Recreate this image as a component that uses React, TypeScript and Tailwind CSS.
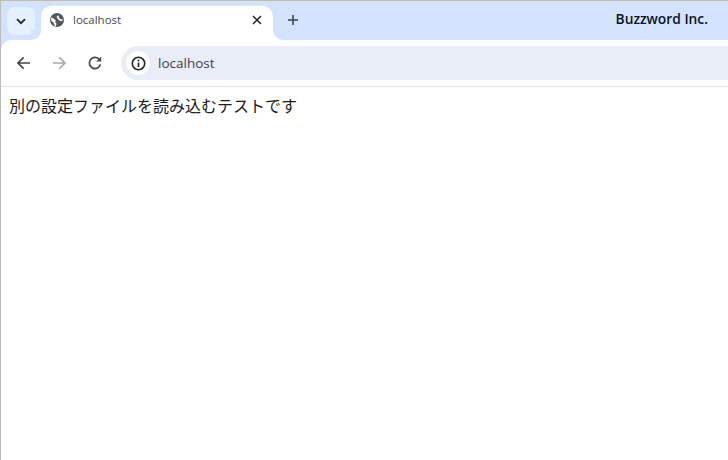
function Globe() {
  return (
    <svg width="16" height="16" viewBox="0 0 16 16">
      <circle cx="8" cy="8" r="7" fill="#54585d" />
      <path d="M2 5.6 4.6 6.4 6.8 8.6 6.2 10.2 7.4 11.4 7 14.4 5.6 13.8 5 11.2 2.2 8.6Z" fill="#fff" />
      <path d="M7.6 4.2 9.8 3.4 9.8 5.4 11.6 7.2 13.6 7.2 13.4 9 10.8 8.8 8.4 6.6Z" fill="#fff" />
    </svg>
  )
}

function TabFlare({ side }: { side: "left" | "right" }) {
  return (
    <div className={side === "left" ? "absolute bottom-0 -left-2.5 w-2.5 h-2.5 bg-white" : "absolute bottom-0 -right-2.5 w-2.5 h-2.5 bg-white"}>
      <div className={side === "left" ? "w-full h-full bg-[#d3e3fd] rounded-br-[10px]" : "w-full h-full bg-[#d3e3fd] rounded-bl-[10px]"} />
    </div>
  )
}

export default function App() {
  return (
    <div className="w-[728px] h-[460px] overflow-hidden bg-white border-l border-t border-[#bcbcbc] font-['Open_Sans','Noto_Sans_CJK_JP',sans-serif]">
      {/* Tab strip */}
      <div className="h-[39px] bg-[#d3e3fd] flex items-end pl-[6px] pr-[20px]">
        <div className="w-[28px] h-[28px] mb-[5px] rounded-[8px] bg-[#e6effe] flex items-center justify-center">
          <svg width="10" height="7" viewBox="0 0 10 7" fill="none" stroke="#1f2937" strokeWidth="1.8">
            <path d="M1 1.2 5 5.2 9 1.2" />
          </svg>
        </div>
        <div className="relative ml-[6px] w-[232px] h-[34px] bg-white rounded-t-[10px] flex items-center pl-[8px] pr-[11px] pb-[6px]">
          <TabFlare side="left" />
          <TabFlare side="right" />
          <Globe />
          <span className="ml-[8px] text-[11.5px] text-[#45494f]">localhost</span>
          <svg className="ml-auto" width="10" height="10" viewBox="0 0 10 10" stroke="#22262b" strokeWidth="1.5">
            <path d="M1 1 9 9M9 1 1 9" />
          </svg>
        </div>
        <svg className="ml-[14px] mb-[14px]" width="12" height="12" viewBox="0 0 12 12" stroke="#3c4043" strokeWidth="1.5">
          <path d="M6 1V11M1 6H11" />
        </svg>
        <span className="ml-auto mb-[10px] text-[13.8px] font-semibold text-[#0b1220]">Buzzword Inc.</span>
      </div>

      {/* Toolbar */}
      <div className="bg-[#d3e3fd]">
        <div className="h-[47px] bg-white rounded-tl-[10px] border-b border-[#e1e3e6] flex items-center pl-[15px]">
          <svg width="15" height="14" viewBox="0 0 15 14" fill="none" stroke="#44474b" strokeWidth="1.7">
            <path d="M14 7H2M7.6 1.4 2 7l5.6 5.6" />
          </svg>
          <svg className="ml-[21px]" width="15" height="14" viewBox="0 0 15 14" fill="none" stroke="#a9abae" strokeWidth="1.7">
            <path d="M1 7H13M7.4 1.4 13 7l-5.6 5.6" />
          </svg>
          <svg className="ml-[20px]" width="16" height="16" viewBox="0 0 16 16" fill="none">
            <path d="M13.4 9.4A5.6 5.6 0 1 1 11.8 3.9" stroke="#44474b" strokeWidth="1.7" />
            <path d="M14.2 1.4V6.4H9.2Z" fill="#44474b" />
          </svg>
          <div className="ml-[18px] flex-1 h-[34px] bg-[#e9edf8] rounded-l-[17px] flex items-center pl-[5px]">
            <div className="w-[24px] h-[24px] rounded-full bg-white flex items-center justify-center">
              <svg width="15" height="15" viewBox="0 0 15 15" fill="none">
                <circle cx="7.5" cy="7.5" r="6.2" stroke="#202327" strokeWidth="1.6" />
                <path d="M7.5 6.6V11" stroke="#202327" strokeWidth="1.7" />
                <circle cx="7.5" cy="4.5" r="1" fill="#202327" />
              </svg>
            </div>
            <span className="ml-[8px] text-[13.5px] text-[#3c4148]">localhost</span>
          </div>
        </div>
      </div>

      {/* Page */}
      <p className="pl-[8px] pt-[7px] text-[16px] leading-[24px] text-[#1c1c1c]">別の設定ファイルを読み込むテストです</p>
    </div>
  )
}
